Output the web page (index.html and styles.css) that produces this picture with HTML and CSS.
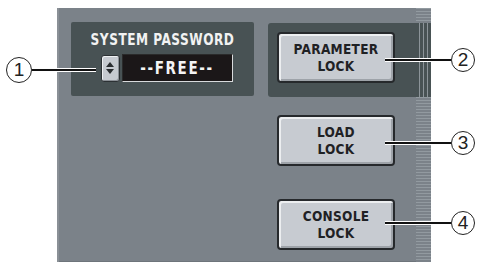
FILE: index.html
```html
<!DOCTYPE html>
<html>
<head>
<meta charset="utf-8">
<link rel="stylesheet" href="styles.css">
</head>
<body>
<div class="stage">
  <div class="panel">
    <div class="main">
      <div class="top-row">
        <div class="box pw-box">
          <div class="title">SYSTEM PASSWORD</div>
          <div class="pw-controls">
            <div class="spin">
              <svg width="12" height="16" viewBox="0 0 12 16">
                <path d="M6 2 L10 7 L2 7 Z" fill="#2a2d30"/>
                <path d="M6 14 L10 9 L2 9 Z" fill="#2a2d30"/>
              </svg>
            </div>
            <div class="display"><span class="tall">--FREE--</span></div>
          </div>
        </div>
        <div class="box lock-box">
          <div class="btn"><span class="ln">PARAMETER</span><span class="ln">LOCK</span></div>
        </div>
      </div>
      <div class="btn load"><span class="ln">LOAD</span><span class="ln">LOCK</span></div>
      <div class="btn console"><span class="ln">CONSOLE</span><span class="ln">LOCK</span></div>
    </div>
    <div class="stripes">
      <div class="st-h st-top"></div>
      <div class="st-v"></div>
      <div class="st-h st-bot"></div>
    </div>
  </div>

  <div class="callout c1"><span class="num">1</span><span class="line"></span></div>
  <div class="callout c2"><span class="line"></span><span class="num">2</span></div>
  <div class="callout c3"><span class="line"></span><span class="num">3</span></div>
  <div class="callout c4"><span class="line"></span><span class="num">4</span></div>
</div>
</body>
</html>
```

FILE: styles.css
```css
html, body {
  margin: 0;
  padding: 0;
  background: #ffffff;
}

.stage {
  position: relative;
  width: 482px;
  height: 264px;
  overflow: hidden;
}

.panel {
  margin-left: 57px;
  margin-top: 8px;
  width: 374px;
  height: 254px;
  display: flex;
  background: #7b8289;
  box-shadow: inset 2px 0 0 #8a9096, inset 0 -1px 0 #6e757b;
}

.main {
  width: 359px;
  padding-top: 14px;
  display: flex;
  flex-direction: column;
}

.top-row {
  display: flex;
  align-items: flex-start;
  gap: 14px;
  padding-left: 14px;
}

.box {
  background: #485254;
  height: 74px;
}

.pw-box {
  width: 183px;
  border-radius: 2px;
  display: flex;
  flex-direction: column;
  align-items: center;
}

.title {
  font-family: "DejaVu Sans Condensed", "DejaVu Sans", sans-serif;
  font-weight: bold;
  font-size: 13.5px;
  line-height: 16px;
  color: #f2f2f2;
  margin-top: 9px;
  letter-spacing: 0.5px;
  transform: scaleY(1.22);
}

.pw-controls {
  display: flex;
  align-items: center;
  gap: 2px;
  margin-top: 7px;
  margin-left: 8px;
}

.spin {
  width: 19px;
  height: 27px;
  box-sizing: border-box;
  background: #c6cad0;
  border: 1px solid #2c3134;
  border-radius: 3px;
  box-shadow: inset 1px 1px 0 #eef0f2, inset -1px -1px 0 #8b9096;
  display: flex;
  align-items: center;
  justify-content: center;
}

.display {
  width: 111px;
  height: 28px;
  box-sizing: border-box;
  background: #1b1718;
  border-right: 1px solid #d8dadc;
  border-bottom: 1px solid #d8dadc;
  border-top: 1px solid #2a2a2a;
  border-left: 1px solid #2a2a2a;
  color: #f4f4f4;
  font-family: "DejaVu Sans Condensed", "DejaVu Sans", sans-serif;
  font-weight: bold;
  font-size: 15px;
  line-height: 26px;
  text-align: center;
  letter-spacing: 1.6px;
}

.tall {
  display: inline-block;
  transform: scaleY(1.12);
}

.lock-box {
  width: 148px;
  margin-top: 1px;
  border-radius: 3px 0 0 3px;
  padding: 9px 0 0 9px;
  box-sizing: border-box;
  height: 74px;
}

.btn {
  width: 118px;
  height: 51px;
  box-sizing: border-box;
  background: #c7cbd1;
  border: 2px solid #26292c;
  border-radius: 4px;
  box-shadow: inset 2px 2px 0 #eceef0, inset -2px -2px 0 #9ea3a9;
  font-family: "DejaVu Sans Condensed", "DejaVu Sans", sans-serif;
  font-weight: bold;
  font-size: 13.5px;
  color: #1f2124;
  text-align: center;
  display: flex;
  flex-direction: column;
  align-items: center;
  justify-content: center;
  letter-spacing: 0.3px;
}

.ln {
  display: block;
  line-height: 16.5px;
  height: 16.5px;
  transform: scaleY(1.05);
}

.load {
  margin-left: 220px;
  margin-top: 18px;
}

.console {
  margin-left: 220px;
  margin-top: 33px;
}

.stripes {
  width: 15px;
  display: flex;
  flex-direction: column;
}

.st-h {
  background: repeating-linear-gradient(to bottom, #929aa0 0px, #929aa0 1px, #7b8289 1px, #7b8289 3px);
}

.st-top {
  height: 15px;
}

.st-v {
  height: 74px;
  background: repeating-linear-gradient(to right, #485254 0px, #485254 3px, #8c9499 3px, #8c9499 4px);
}

.st-bot {
  flex: 1;
}

.callout {
  position: absolute;
  display: flex;
  align-items: center;
}

.num {
  width: 24px;
  height: 24px;
  box-sizing: border-box;
  border: 1px solid #222;
  border-radius: 50%;
  background: #fff;
  font-family: "Liberation Sans", sans-serif;
  font-size: 19px;
  line-height: 22px;
  text-align: center;
  color: #222;
  flex: none;
}

.line {
  height: 2px;
  background: #111;
  border-top: 1px solid #fff;
  border-bottom: 1px solid #fff;
}

.c1 { left: 6px; top: 57px; }
.c1 .num { width: 26px; height: 26px; line-height: 24px; }
.c1 .line { width: 64px; }

.c2 { left: 385px; top: 48px; }
.c2 .line { width: 66px; }

.c3 { left: 385px; top: 131px; }
.c3 .line { width: 66px; }

.c4 { left: 385px; top: 211px; }
.c4 .line { width: 66px; }
```
